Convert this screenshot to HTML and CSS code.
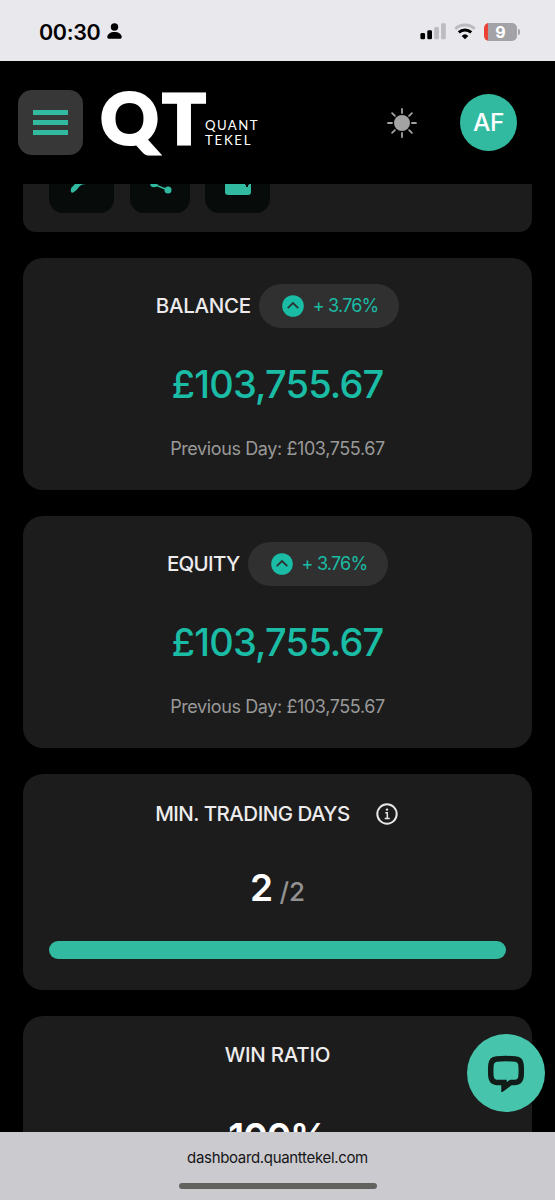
FILE: index.html
```html
<!DOCTYPE html>
<html lang="en">
<head>
<meta charset="utf-8">
<title>Quant Tekel Dashboard</title>
<link rel="stylesheet" href="styles.css">
</head>
<body>
<div class="status">
  <span class="clock">00:30</span>
  <svg class="person" width="15" height="17" viewBox="0 0 15 17"><circle cx="7.5" cy="4" r="3.7"/><path d="M.3 14.3C.3 11 3.5 9 7.500 9s7.200 2 7.200 5.300c0 .9-.6 1.400-1.400 1.400H1.700C.9 15.700.3 15.200.3 14.300z"/></svg>
  <div class="signals">
    <svg width="26" height="17" viewBox="0 0 26 17"><rect x=".4" y="10" width="4.700" height="6.300" rx="1.400"/><rect x="7.300" y="7.300" width="4.700" height="9" rx="1.400"/><rect x="14.200" y="4" width="4.700" height="12.300" rx="1.400" fill="#bcbbc0"/><rect x="21.100" y=".3" width="4.700" height="16" rx="1.400" fill="#bcbbc0"/></svg>
    <svg width="22" height="17" viewBox="0 0 22 17"><g fill="none" stroke-width="3"><path d="M1.300 5.800a14.300 14.300 0 0 1 19.400 0" stroke="#bcbbc0"/><path d="M4.800 9.400a9.300 9.300 0 0 1 12.400 0" stroke="#000"/></g><path d="M11 16.300L7.700 12.900a4.800 4.800 0 0 1 6.600 0z"/></svg>
    <div class="battery"><span>9</span></div>
  </div>
</div>

<header class="header">
  <button class="menu" aria-label="Menu"><i></i><i></i><i></i></button>
  <svg class="logo" width="160" height="72" viewBox="0 0 160 72" fill="#fff">
    <text class="mark q" x="-.5" y="53.500" textLength="58" lengthAdjust="spacingAndGlyphs">Q</text>
    <text class="mark" x="61.500" y="53.500" textLength="43" lengthAdjust="spacingAndGlyphs">T</text>
    <text class="word" x="104" y="40" textLength="52.500">QUANT</text>
    <text class="word" x="104" y="54.500" textLength="45.500">TEKEL</text>
  </svg>
  <svg class="sun" width="30" height="30" viewBox="0 0 30 30"><circle cx="15" cy="15" r="8" fill="#a3a3a3"/><path d="M15 1v4M15 25v4M1 15h4M25 15h4M5.100 5.100l2.800 2.800M22.100 22.100l2.800 2.800M5.100 24.900l2.800-2.800M22.100 7.900l2.800-2.800" stroke="#a3a3a3" stroke-width="1.800" stroke-linecap="round"/></svg>
  <div class="avatar">AF</div>
</header>

<main class="content">
  <section class="card actions">
    <div class="tile wide"><svg width="26" height="26" viewBox="0 0 26 26"><path d="M2 23Q1 19 5 16L17 4l5 4-5 7q-5 0-7 3t-5 5q-2 1.500-3 0z" fill="#31ba9f"/></svg></div>
    <div class="tile"><svg width="26" height="26" viewBox="0 0 26 26"><path d="M22 3L6 15l15 6" fill="none" stroke="#31ba9f" stroke-width="1.500"/><g fill="#31ba9f"><circle cx="21.500" cy="3" r="3.500"/><circle cx="7" cy="14.500" r="3.800"/><circle cx="21" cy="21" r="3.500"/></g></svg></div>
    <div class="tile wide"><svg width="26" height="26" viewBox="0 0 26 26"><path d="M0 3h26v20q0 3-3 3H3q-3 0-3-3z" fill="#31ba9f"/><path d="M20 13h4v3h-1v2h-2v-2h-1z" fill="#070b09"/></svg></div>
  </section>

  <section class="card metric">
    <div class="title"><h2 class="balance">BALANCE</h2>
      <div class="pill"><svg width="22" height="22" viewBox="0 0 22 22"><circle cx="11" cy="11" r="10.800" fill="#1abca5"/><path d="M5.700 13.200L11 8l5.300 5.200" fill="none" stroke="#2c3433" stroke-width="1.800"/></svg><span>+ 3.76%</span></div></div>
    <p class="amount">£103,755.67</p>
    <p class="previous">Previous Day: £103,755.67</p>
  </section>

  <section class="card metric">
    <div class="title"><h2 class="equity">EQUITY</h2>
      <div class="pill"><svg width="22" height="22" viewBox="0 0 22 22"><circle cx="11" cy="11" r="10.800" fill="#1abca5"/><path d="M5.700 13.200L11 8l5.300 5.200" fill="none" stroke="#2c3433" stroke-width="1.800"/></svg><span>+ 3.76%</span></div></div>
    <p class="amount">£103,755.67</p>
    <p class="previous">Previous Day: £103,755.67</p>
  </section>

  <section class="card days">
    <div class="title"><h2 class="trading">MIN. TRADING DAYS</h2>
      <svg width="22" height="22" viewBox="0 0 22 22"><circle cx="11" cy="11" r="9.700" fill="none" stroke="#e8e6e6" stroke-width="2"/><path d="M9.300 9.700h2v5M8.700 15.400h5" fill="none" stroke="#e8e6e6" stroke-width="1.500"/><circle cx="11" cy="6.600" r="1.200" fill="#e8e6e6"/></svg></div>
    <p class="count"><b>2</b><span>/2</span></p>
    <div class="progress"></div>
  </section>

  <section class="card ratio">
    <h2 class="win">WIN RATIO</h2>
    <p class="percent">100%</p>
  </section>
</main>

<footer class="browser">
  <span class="url">dashboard.quanttekel.com</span>
  <div class="home"></div>
</footer>
<button class="chat" aria-label="Chat"><svg width="38" height="38" viewBox="0 0 38 38"><path d="M9.500 5q9.500-.8 19 0 5 .5 5.500 5.500.6 6.500 0 12.500-.5 5-6 5.400h-4L17 33.500V28.400H9.500q-5-.5-5.500-5.400-.6-6 0-12.500Q4.500 5.500 9.500 5z" fill="none" stroke="#111b18" stroke-width="5.500"/></svg></button>
</body>
</html>
```
FILE: styles.css
```css
* { box-sizing: border-box; }
body { margin: 0; width: 555px; height: 1200px; overflow: hidden; background: #000; display: flex; flex-direction: column; font-family: Inter, "Liberation Sans", sans-serif; position: relative; }
h2, p { margin: 0; }
svg { display: block; flex: none; }
button { border: 0; padding: 0; }

.status { flex: none; height: 61px; background: #e9e8ed; display: flex; align-items: center; padding: 2px 38px 0 39px; }
.clock { font-size: 21.5px; font-weight: 600; letter-spacing: -.35px; width: 68px; white-space: nowrap; }
.signals { margin-left: auto; display: flex; align-items: center; gap: 8px; }
.battery { width: 33px; height: 18px; border-radius: 5px; background: linear-gradient(90deg, #eb4136 4px, #a3a2a7 4px); color: #fff; font-size: 16px; line-height: 18px; font-weight: 700; text-align: center; position: relative; }
.battery::after { content: ""; position: absolute; left: 34px; top: 6px; width: 2px; height: 6px; border-radius: 0 2px 2px 0; background: #a3a2a7; }

.header { flex: none; height: 123px; display: flex; align-items: center; padding: 0 38px 0 18px; }
.menu { width: 65px; height: 65px; border-radius: 14px; background: #373737; display: flex; flex-direction: column; align-items: center; justify-content: center; gap: 4.600px; }
.menu i { width: 35px; height: 5px; background: #31ba9f; }
.logo { margin-left: 18px; margin-top: 6px; overflow: visible; }
.mark { font-family: Lato, sans-serif; font-weight: 900; font-size: 68px; stroke: #fff; stroke-width: 3px; }
.q { font-size: 70px; }
.word { font-family: Lato, sans-serif; font-size: 13.200px; }
.sun { margin-left: 126px; }
.avatar { margin-left: auto; width: 57px; height: 57px; border-radius: 50%; background: #31ba9f; color: #fff; font-size: 24.500px; font-weight: 500; letter-spacing: -.3px; line-height: 56px; text-align: center; }

.content { flex: 1; min-height: 0; overflow: hidden; padding: 0 23px; display: flex; flex-direction: column; gap: 26px; }
.card { flex: none; background: #1c1c1c; border-radius: 20px; text-align: center; }
.actions { height: 81.300px; margin-top: -33px; border-radius: 0 0 13px 13px; padding: 0 26px; display: flex; align-items: flex-start; gap: 15.500px; }
.tile { width: 60px; height: 62px; border-radius: 14px; background: #070b09; display: flex; align-items: flex-end; justify-content: center; padding-bottom: 18px; }
.wide { width: 65px; }
.metric { height: 231.900px; padding-top: 26px; }
.title { display: flex; align-items: center; justify-content: center; }
h2 { font-size: 20.500px; font-weight: 500; line-height: 26px; color: #edebec; white-space: nowrap; }
.balance { letter-spacing: -.3px; }
.equity { letter-spacing: -.7px; }
.trading { letter-spacing: -.53px; }
.win { letter-spacing: -.25px; }
.pill { width: 140px; height: 44px; margin-left: 8.500px; border-radius: 22px; background: #303030; display: flex; align-items: center; padding-left: 23px; gap: 8.500px; color: #1abca5; font-size: 18px; letter-spacing: -.8px; white-space: nowrap; }
.pill span { padding-bottom: 2px; }
.amount { margin-top: 31px; font-size: 38px; line-height: 50px; font-weight: 500; letter-spacing: -.85px; color: #1abca5; }
.previous { margin-top: 27px; font-size: 18px; line-height: 26px; letter-spacing: -.4px; color: #999; }
.days { height: 216px; padding: 27px 26px 0; }
.days .title { padding-right: 2px; }
.days .title svg { margin-left: 26px; }
.count { margin-top: 35px; line-height: 52px; display: flex; align-items: baseline; justify-content: center; gap: 6.500px; color: #fff; }
.count b { font-size: 37px; font-weight: 600; }
.count span { font-size: 26px; font-weight: 500; letter-spacing: -.1px; color: #929292; }
.progress { height: 18px; border-radius: 9px; background: #31ba9f; margin-top: 23px; }
.ratio { height: 232px; padding-top: 26px; }
.percent { margin-top: 43.500px; font-size: 38px; line-height: 50px; font-weight: 600; letter-spacing: -1.500px; color: #fff; }

.browser { flex: none; height: 68px; background: #cbcacf; display: flex; flex-direction: column; align-items: center; padding-top: 16px; }
.url { font-size: 15px; line-height: 20px; letter-spacing: -.33px; color: #161618; }
.home { width: 198px; height: 6px; border-radius: 3px; background: #62625f; margin-top: 15px; }
.chat { position: absolute; left: 467px; top: 1034px; width: 78px; height: 78px; border-radius: 50%; background: #46c5ac; display: flex; align-items: center; justify-content: center; }
```
